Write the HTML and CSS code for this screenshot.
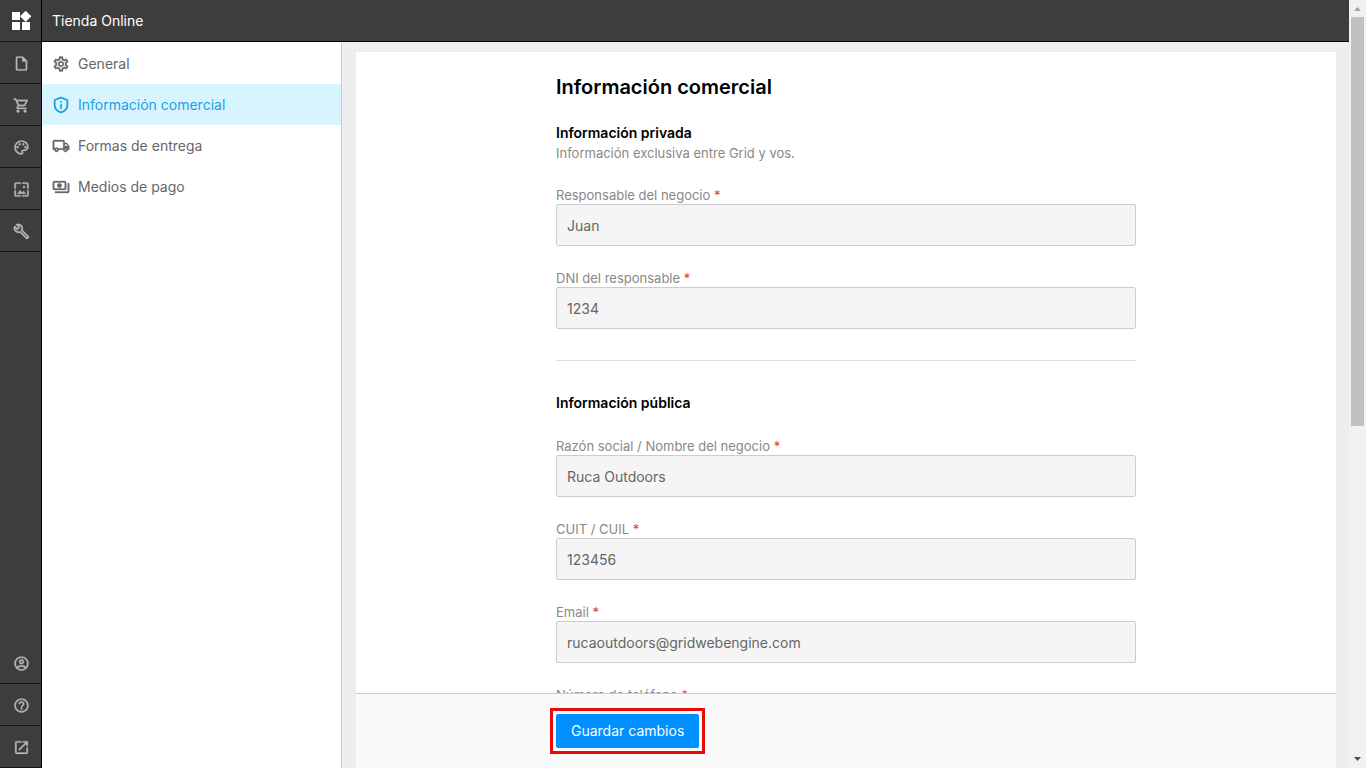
FILE: index.html
```html
<!DOCTYPE html>
<html lang="es">
<head>
<meta charset="utf-8">
<meta name="viewport" content="width=device-width, initial-scale=1">
<title>Tienda Online</title>
<link rel="stylesheet" href="styles.css">
</head>
<body>
<div class="app">
  <nav class="rail" aria-label="Principal">
    <a class="rail-item rail-logo" href="#" aria-label="Inicio"><svg class="icon-logo" viewBox="0 0 24 24"><path d="M13 13v8h8v-8h-8zM3 21h8v-8H3v8zM3 3v8h8V3H3zm13.66-1.31L11 7.34 16.66 13l5.66-5.66-5.66-5.65z"/></svg></a>
    <a class="rail-item" href="#" aria-label="Páginas"><svg class="icon-rail" viewBox="0 0 24 24"><path d="M14 2H6c-1.1 0-2 .9-2 2v16c0 1.1.9 2 2 2h12c1.1 0 2-.9 2-2V8l-6-6zM6 20V4h7v5h5v11H6z"/></svg></a>
    <a class="rail-item" href="#" aria-label="Tienda"><svg class="icon-rail" viewBox="0 0 24 24"><path d="M15.55 13c.75 0 1.41-.41 1.75-1.03l3.58-6.49c.37-.66-.11-1.48-.87-1.48H5.21l-.94-2H1v2h2l3.6 7.59-1.35 2.44C4.52 15.37 5.48 17 7 17h12v-2H7l1.1-2h7.45zM6.16 6h12.15l-2.76 5H8.53L6.16 6zM7 18c-1.1 0-1.99.9-1.99 2S5.9 22 7 22s2-.9 2-2-.9-2-2-2zm10 0c-1.1 0-1.99.9-1.99 2s.89 2 1.99 2 2-.9 2-2-.9-2-2-2z"/></svg></a>
    <a class="rail-item" href="#" aria-label="Diseño"><svg class="icon-rail" viewBox="0 0 24 24"><path d="M12 22C6.49 22 2 17.51 2 12S6.49 2 12 2s10 4.04 10 9c0 3.31-2.69 6-6 6h-1.77c-.28 0-.5.22-.5.5 0 .12.05.23.13.33.41.47.64 1.06.64 1.67 0 1.38-1.12 2.5-2.5 2.5zm0-18c-4.41 0-8 3.59-8 8s3.59 8 8 8c.28 0 .5-.22.5-.5 0-.16-.08-.28-.14-.35-.41-.46-.63-1.05-.63-1.65 0-1.38 1.12-2.5 2.5-2.5H16c2.21 0 4-1.79 4-4 0-3.86-3.59-7-8-7z"/><circle cx="6.5" cy="11.5" r="1.5"/><circle cx="9.5" cy="7.5" r="1.5"/><circle cx="14.5" cy="7.5" r="1.5"/><circle cx="17.5" cy="11.5" r="1.5"/></svg></a>
    <a class="rail-item" href="#" aria-label="Imágenes"><svg class="icon-rail" viewBox="0 0 24 24"><path d="M4 4h7V2H4c-1.1 0-2 .9-2 2v7h2V4zm6 9l-4 5h12l-3-4-2.03 2.71L10 13zm7-4.5c0-.83-.67-1.5-1.5-1.5S14 7.67 14 8.5s.67 1.5 1.5 1.5S17 9.33 17 8.5zM20 2h-7v2h7v7h2V4c0-1.1-.9-2-2-2zm0 18h-7v2h7c1.1 0 2-.9 2-2v-7h-2v7zM4 13H2v7c0 1.1.9 2 2 2h7v-2H4v-7z"/></svg></a>
    <a class="rail-item" href="#" aria-label="Herramientas"><svg class="icon-rail" viewBox="0 0 24 24"><path d="M22.61 18.99l-9.08-9.08c.93-2.34.45-5.1-1.44-7C9.79.61 6.21.4 3.66 2.26L7.5 6.11 6.08 7.52 2.25 3.69C.39 6.23.6 9.82 2.9 12.11c1.86 1.86 4.57 2.35 6.89 1.48l9.11 9.11c.39.39 1.02.39 1.41 0l2.3-2.3c.4-.38.4-1.01 0-1.41zm-3 1.6l-9.46-9.46c-.61.45-1.29.72-2 .82-1.36.2-2.79-.21-3.83-1.25C3.37 9.76 2.93 8.5 3 7.26l3.09 3.09 4.24-4.24-3.09-3.09c1.24-.07 2.49.37 3.44 1.31 1.08 1.08 1.49 2.57 1.24 3.96-.12.71-.42 1.37-.88 1.96l9.45 9.45-.88.89z"/></svg></a>
    <span class="rail-spacer"></span>
    <a class="rail-item" href="#" aria-label="Cuenta"><svg class="icon-rail" viewBox="0 0 24 24"><path d="M12 2C6.48 2 2 6.48 2 12s4.48 10 10 10 10-4.48 10-10S17.52 2 12 2zM7.07 18.28c.43-.9 3.05-1.78 4.93-1.78s4.51.88 4.93 1.78C15.57 19.36 13.86 20 12 20s-3.57-.64-4.93-1.72zm11.29-1.45c-1.43-1.74-4.9-2.33-6.36-2.33s-4.93.59-6.36 2.33C4.62 15.49 4 13.82 4 12c0-4.41 3.59-8 8-8s8 3.59 8 8c0 1.82-.62 3.49-1.64 4.83zM12 6c-1.94 0-3.5 1.56-3.5 3.5S10.06 13 12 13s3.5-1.56 3.5-3.5S13.94 6 12 6zm0 5c-.83 0-1.5-.67-1.5-1.5S11.17 8 12 8s1.5.67 1.5 1.5S12.83 11 12 11z"/></svg></a>
    <a class="rail-item" href="#" aria-label="Ayuda"><svg class="icon-rail" viewBox="0 0 24 24"><path d="M11 18h2v-2h-2v2zm1-16C6.48 2 2 6.48 2 12s4.48 10 10 10 10-4.48 10-10S17.52 2 12 2zm0 18c-4.41 0-8-3.59-8-8s3.59-8 8-8 8 3.59 8 8-3.59 8-8 8zm0-14c-2.21 0-4 1.79-4 4h2c0-1.1.9-2 2-2s2 .9 2 2c0 2-3 1.75-3 5h2c0-2.25 3-2.5 3-5 0-2.21-1.79-4-4-4z"/></svg></a>
    <a class="rail-item" href="#" aria-label="Ver sitio"><svg class="icon-rail" viewBox="0 0 24 24"><path d="M19 19H5V5h7V3H5c-1.11 0-2 .9-2 2v14c0 1.1.89 2 2 2h14c1.1 0 2-.9 2-2v-7h-2v7zM14 3v2h3.59l-9.83 9.83 1.41 1.41L19 6.41V10h2V3h-7z"/></svg></a>
  </nav>

  <div class="workspace">
    <header class="topbar">Tienda Online</header>
    <div class="columns">
      <nav class="sidebar" aria-label="Tienda Online">
        <a class="side-item" href="#"><svg class="icon-side" viewBox="0 0 24 24"><path d="M19.43 12.98c.04-.32.07-.64.07-.98 0-.34-.03-.66-.07-.98l2.11-1.65c.19-.15.24-.42.12-.64l-2-3.46c-.09-.16-.26-.25-.44-.25-.06 0-.12.01-.17.03l-2.49 1c-.52-.4-1.08-.73-1.69-.98l-.38-2.65C14.46 2.18 14.25 2 14 2h-4c-.25 0-.46.18-.49.42l-.38 2.65c-.61.25-1.17.59-1.69.98l-2.49-1c-.06-.02-.12-.03-.18-.03-.17 0-.34.09-.43.25l-2 3.46c-.13.22-.07.49.12.64l2.11 1.65c-.04.32-.07.65-.07.98 0 .33.03.66.07.98l-2.11 1.65c-.19.15-.24.42-.12.64l2 3.46c.09.16.26.25.44.25.06 0 .12-.01.17-.03l2.49-1c.52.4 1.08.73 1.69.98l.38 2.65c.03.24.24.42.49.42h4c.25 0 .46-.18.49-.42l.38-2.65c.61-.25 1.17-.59 1.69-.98l2.49 1c.06.02.12.03.18.03.17 0 .34-.09.43-.25l2-3.46c.12-.22.07-.49-.12-.64l-2.11-1.65zm-1.98-1.71c.04.31.05.52.05.73 0 .21-.02.43-.05.73l-.14 1.13.89.7 1.08.84-.7 1.21-1.27-.51-1.04-.42-.9.68c-.43.32-.84.56-1.25.73l-1.06.43-.16 1.13-.2 1.35h-1.4l-.19-1.35-.16-1.13-1.06-.43c-.43-.18-.83-.41-1.23-.71l-.91-.7-1.06.43-1.27.51-.7-1.21 1.08-.84.89-.7-.14-1.13c-.03-.31-.05-.54-.05-.74s.02-.43.05-.73l.14-1.13-.89-.7-1.08-.84.7-1.21 1.27.51 1.04.42.9-.68c.43-.32.84-.56 1.25-.73l1.06-.43.16-1.13.2-1.35h1.39l.19 1.35.16 1.13 1.06.43c.43.18.83.41 1.23.71l.91.7 1.06-.43 1.27-.51.7 1.21-1.07.85-.89.7.14 1.13zM12 8c-2.21 0-4 1.79-4 4s1.79 4 4 4 4-1.79 4-4-1.79-4-4-4zm0 6c-1.1 0-2-.9-2-2s.9-2 2-2 2 .9 2 2-.9 2-2 2z"/></svg>General</a>
        <a class="side-item side-item-active" href="#" aria-current="page"><svg class="icon-side" viewBox="0 0 24 24"><path class="shield" d="M12 2.200 20.500 5.300V11.500c0 4.900-3.500 8.700-8.500 10.300-5-1.600-8.500-5.400-8.500-10.300V5.300z"/><path d="M11 11h2v6h-2zM11 7h2v2h-2z"/></svg>Información comercial</a>
        <a class="side-item" href="#"><svg class="icon-side" viewBox="0 0 24 24"><path d="M20 8h-3V6c0-1.100-.9-2-2-2H3c-1.100 0-2 .9-2 2v11h2c0 1.660 1.340 3 3 3s3-1.340 3-3h6c0 1.660 1.340 3 3 3s3-1.340 3-3h2v-5l-3-4zm-.5 1.500l1.960 2.500H17V9.500h2.500zM6 18c-.55 0-1-.45-1-1s.45-1 1-1 1 .45 1 1-.45 1-1 1zm2.220-3c-.55-.61-1.330-1-2.220-1s-1.670.39-2.220 1H3V6h12v9H8.220zM18 18c-.55 0-1-.45-1-1s.45-1 1-1 1 .45 1 1-.45 1-1 1z"/></svg>Formas de entrega</a>
        <a class="side-item" href="#"><svg class="icon-side" viewBox="0 0 24 24"><path d="M19 14V6c0-1.1-.9-2-2-2H3c-1.1 0-2 .9-2 2v8c0 1.1.9 2 2 2h14c1.1 0 2-.9 2-2zm-2 0H3V6h14v8zm-7-7c-1.66 0-3 1.34-3 3s1.34 3 3 3 3-1.34 3-3-1.34-3-3-3zm13 0v11c0 1.1-.9 2-2 2H4v-2h17V7h2z"/></svg>Medios de pago</a>
      </nav>

      <main class="main">
        <form class="panel">
          <div class="panel-body">
            <div class="content">
              <h1 class="title">Información comercial</h1>
              <section>
                <h2 class="section-title">Información privada</h2>
                <p class="section-note">Información exclusiva entre Grid y vos.</p>
                <div class="fields">
                  <div><label class="label" for="owner">Responsable del negocio <span class="required">*</span></label><input class="input" id="owner" type="text" value="Juan"></div>
                  <div><label class="label" for="dni">DNI del responsable <span class="required">*</span></label><input class="input" id="dni" type="text" value="1234"></div>
                </div>
              </section>
              <hr class="divider">
              <section>
                <h2 class="section-title">Información pública</h2>
                <div class="fields">
                  <div><label class="label" for="company">Razón social / Nombre del negocio <span class="required">*</span></label><input class="input" id="company" type="text" value="Ruca Outdoors"></div>
                  <div><label class="label" for="cuit">CUIT / CUIL <span class="required">*</span></label><input class="input" id="cuit" type="text" value="123456"></div>
                  <div><label class="label" for="email">Email <span class="required">*</span></label><input class="input" id="email" type="email" value="rucaoutdoors@gridwebengine.com"></div>
                  <div><label class="label" for="phone">Número de teléfono <span class="required">*</span></label><input class="input" id="phone" type="tel"></div>
                </div>
              </section>
            </div>
          </div>
          <div class="actions">
            <div class="content"><div class="highlight"><button class="save" type="button">Guardar cambios</button></div></div>
          </div>
        </form>
      </main>
    </div>
  </div>

  <div class="scrollbar" aria-hidden="true">
    <svg class="scroll-arrow scroll-arrow-up" viewBox="0 0 17 17"><path d="M5 11h7L8.500 7z"/></svg>
    <div class="scroll-track"><div class="scroll-thumb"></div></div>
    <svg class="scroll-arrow" viewBox="0 0 17 17"><path d="M5 6h7l-3.500 4z"/></svg>
  </div>
</div>
</body>
</html>
```
FILE: styles.css
```css
* {
  box-sizing: border-box;
}

body {
  margin: 0;
  font-family: Inter, "Liberation Sans", sans-serif;
  font-size: 14px;
  color: #666;
}

a {
  color: inherit;
  text-decoration: none;
}

svg {
  display: block;
  fill: currentColor;
  flex: none;
}

.app {
  display: flex;
  height: 100vh;
}

/* Icon rail */
.rail {
  display: flex;
  flex-direction: column;
  flex: none;
  width: 42px;
  background: #3d3d3d;
  border-right: 1px solid #000;
  color: #b8b8b8;
}

.rail-item {
  display: flex;
  align-items: center;
  justify-content: center;
  height: 42px;
  padding: 1px 0 0 1px;
  border-bottom: 1px solid #161616;
}

.rail-logo {
  padding: 0;
  color: #fff;
}

.rail-spacer {
  flex: 1;
}

.icon-logo {
  width: 24px;
  height: 24px;
}

.icon-rail {
  width: 17px;
  height: 17px;
  stroke: currentColor;
  stroke-width: 0.4;
}

/* Header and columns */
.workspace {
  display: flex;
  flex-direction: column;
  flex: 1;
  min-width: 0;
}

.topbar {
  flex: none;
  height: 42px;
  padding-left: 10px;
  line-height: 41px;
  background: #3d3d3d;
  border-bottom: 1px solid #000;
  color: #fff;
}

.columns {
  display: flex;
  flex: 1;
  min-height: 0;
}

.sidebar {
  flex: none;
  width: 300px;
  padding-top: 1px;
  background: #fff;
  border-right: 1px solid #ccc;
}

.side-item {
  display: flex;
  align-items: center;
  gap: 8px;
  height: 41px;
  padding-left: 10px;
}

.side-item-active {
  background: #d8f5ff;
  color: #1a9fe6;
}

.icon-side {
  width: 18px;
  height: 18px;
  stroke: currentColor;
  stroke-width: 0.4;
}

.shield {
  fill: none;
  stroke-width: 2.4;
  stroke-linejoin: round;
}

/* Form panel */
.main {
  display: flex;
  flex: 1;
  min-width: 0;
  padding: 10px 13px 0 14px;
  background: #eee;
}

.panel {
  display: flex;
  flex-direction: column;
  flex: 1;
  min-width: 0;
  background: #fff;
}

.panel-body {
  flex: 1;
  min-height: 0;
  padding: 20px 20px 0;
  overflow: hidden;
}

.content {
  max-width: 580px;
  margin: 0 auto;
}

.title {
  margin: 0 0 20px;
  font-size: 20px;
  font-weight: 600;
  line-height: 30px;
  color: #000;
}

.section-title {
  margin: 0;
  font-size: 14px;
  font-weight: 600;
  line-height: 22px;
  color: #000;
}

.section-note {
  margin: 0;
  font-size: 13px;
  line-height: 19px;
  color: #888;
}

.fields {
  display: grid;
  gap: 23px;
  padding-top: 23px;
}

.label {
  display: block;
  font-size: 13px;
  line-height: 18px;
  color: #888;
}

.required {
  color: #e53935;
}

.input {
  display: block;
  width: 100%;
  height: 42px;
  padding: 0 10px;
  border: 1px solid #ccc;
  border-radius: 2px;
  background: #f5f5f5;
  font: inherit;
  color: #666;
}

.divider {
  margin: 31px 0;
  border: 0;
  border-top: 1px solid #ddd;
}

.actions {
  flex: none;
  padding: 20px;
  background: #fafafa;
  border-top: 1px solid #ccc;
}

.highlight {
  width: fit-content;
  outline: 3px solid #e60c0c;
  outline-offset: 3px;
}

.save {
  display: block;
  height: 34px;
  padding: 0 15px 2px;
  border: 0;
  border-radius: 2px;
  background: #0090ff;
  font: inherit;
  color: #fff;
}

/* Scrollbar */
.scrollbar {
  display: flex;
  flex-direction: column;
  flex: none;
  width: 17px;
  background: #f1f1f1;
}

.scroll-arrow {
  width: 17px;
  height: 17px;
  fill: #505050;
}

.scroll-arrow-up {
  fill: #a3a3a3;
}

.scroll-track {
  flex: 1;
  padding: 0 2px;
}

.scroll-thumb {
  height: 55.7%;
  background: #c1c1c1;
}
```
